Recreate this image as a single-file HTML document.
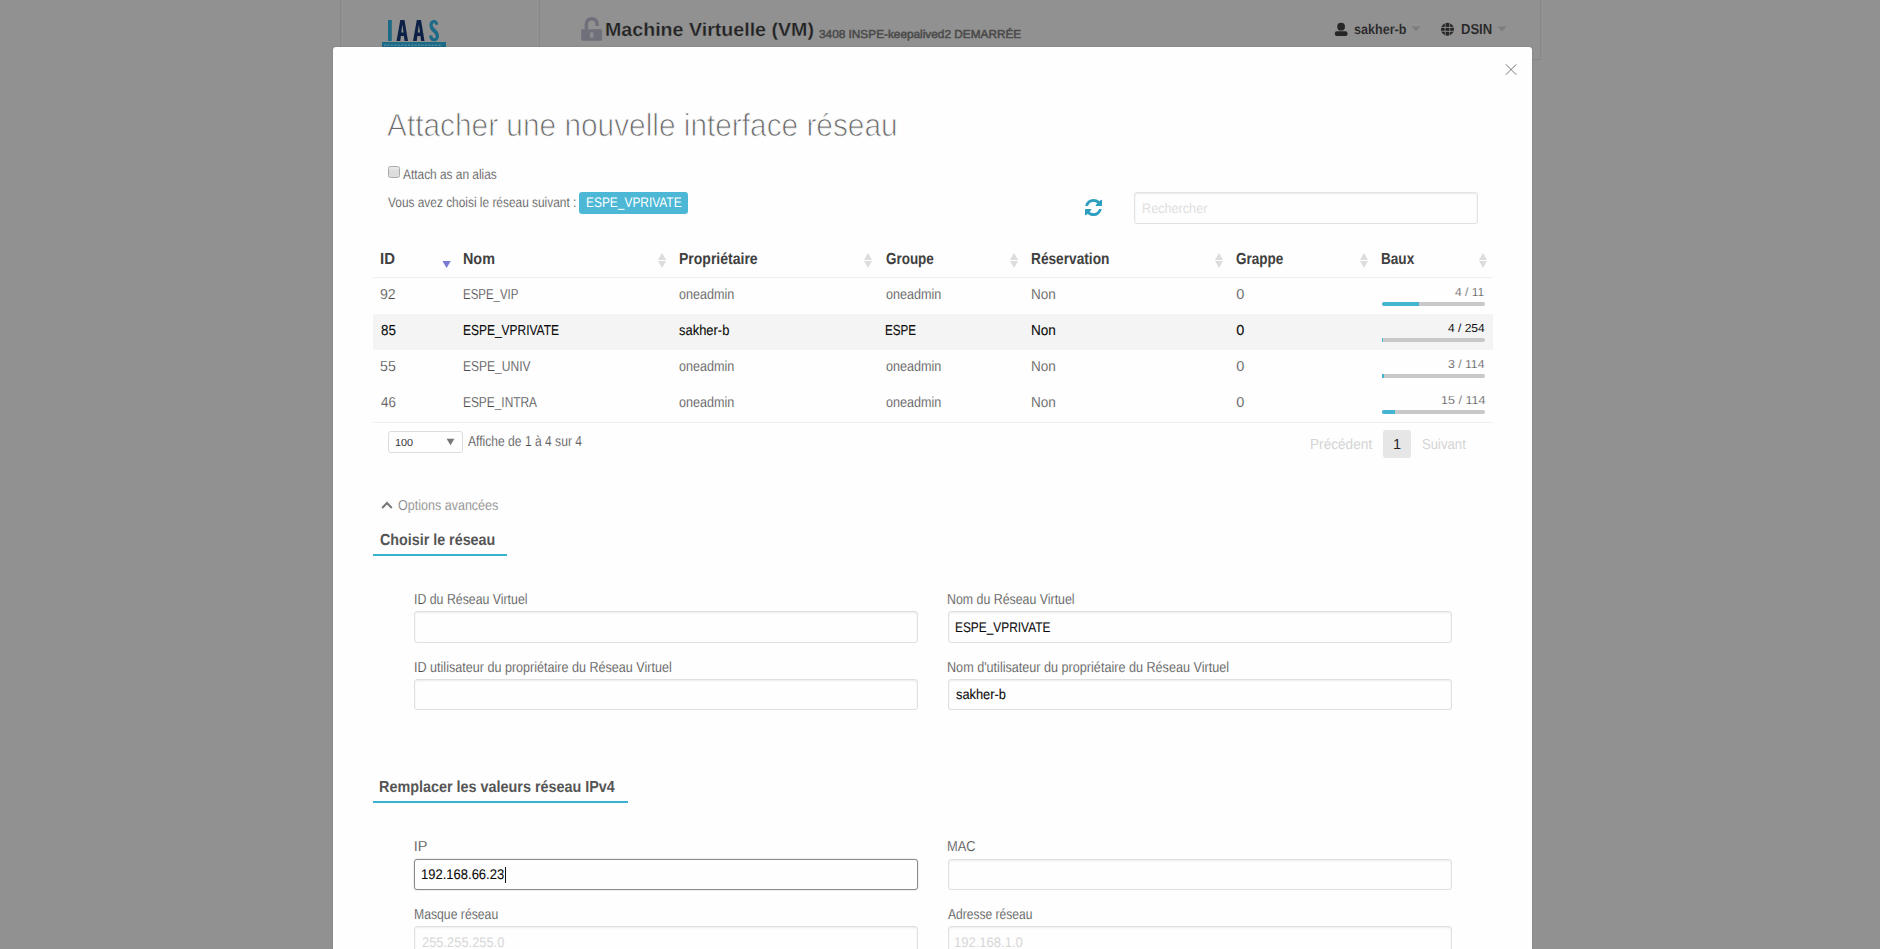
<!DOCTYPE html>
<html><head><meta charset="utf-8"><title>Attacher une nouvelle interface réseau</title>
<style>
html,body{margin:0;padding:0}
body{width:1880px;height:949px;overflow:hidden;position:relative;background:#919191;font-family:"Liberation Sans",sans-serif;text-rendering:geometricPrecision}
.b{position:absolute}
.t{position:absolute;white-space:pre;transform-origin:0 0}
</style></head><body>
<div class="b" style="left:340px;top:0px;width:1px;height:47px;background:#878787"></div>
<div class="b" style="left:539px;top:0px;width:1px;height:47px;background:#878787"></div>
<div class="b" style="left:1540px;top:0px;width:1px;height:59px;background:#878787"></div>
<div class="b" style="left:1532px;top:59px;width:9px;height:1px;background:#878787"></div>
<svg class="b" style="left:380px;top:17px" width="70" height="31" viewBox="0 0 70 31">
<rect x="8" y="3" width="3.8" height="21" fill="#1d6a86"/>
<path d="M16.5 24 L20.3 3 L24.5 3 L28 24 L24.6 24 L23.9 19 L20.9 19 L20.2 24 Z M21.3 15.5 L23.5 15.5 L22.4 7.5 Z" fill="#0d2146"/>
<path d="M33 24 L36.8 3 L41 3 L44.5 24 L41.1 24 L40.4 19 L37.4 19 L36.7 24 Z M37.8 15.5 L40 15.5 L38.9 7.5 Z" fill="#0d2146"/>
<path d="M58.2 7.6 C57.8 4.5 56.5 3 53.9 3 C51.2 3 49.4 5 49.4 8.2 C49.4 14.5 55.7 15.2 55.7 19.3 C55.7 20.6 55.1 21.2 54.1 21.2 C53 21.2 52.4 20.4 52.3 18.3 L49.1 18.5 C49.3 22.3 50.9 24.3 54 24.3 C57.1 24.3 59 22.2 59 19 C59 12.5 52.7 11.8 52.7 7.9 C52.7 6.8 53.2 6.1 54 6.1 C54.9 6.1 55.3 6.8 55.4 8.1 Z" fill="#1d6a86"/>
<rect x="2" y="25" width="64" height="6" fill="#1d6a86"/>
<path d="M4 28.3 h58" stroke="#4f8aa2" stroke-width="1.6" stroke-dasharray="2.2 1.2"/>
</svg>
<svg class="b" style="left:580px;top:16px" width="24" height="26" viewBox="0 0 24 26"><path d="M6.35 13.6 V8.15 A5.4 5.4 0 0 1 17.15 8.15 V9.9" fill="none" stroke="#6f7079" stroke-width="3.5"/><rect x="1.2" y="13.2" width="20.9" height="11.6" rx="1.6" fill="#6f7079"/><ellipse cx="11.75" cy="18.95" rx="1.9" ry="3" fill="#8c8c90"/></svg>
<svg class="b" style="left:1333px;top:22px" width="16" height="15" viewBox="0 0 16 15"><circle cx="8.1" cy="4.7" r="3.9" fill="#262626"/><rect x="1.8" y="9.3" width="12.8" height="4.8" rx="2.1" fill="#262626"/></svg>
<svg class="b" style="left:1440px;top:22px" width="15" height="15" viewBox="0 0 15 15"><defs><clipPath id="gc"><circle cx="7.45" cy="7.3" r="6.45"/></clipPath></defs><g clip-path="url(#gc)"><rect x="0" y="0" width="15" height="15" fill="#262626"/><path d="M0 5.4 H15 M0 9.3 H15" stroke="#919191" stroke-width="0.9"/><path d="M5.6 0 C4.9 4 4.9 10.6 5.6 15 M9.3 0 C10 4 10 10.6 9.3 15" stroke="#919191" stroke-width="0.8" fill="none"/></g></svg>
<svg class="b" style="left:1411px;top:26px" width="11" height="6"><path d="M0.5 0.5 H9.5 L5 5.2 Z" fill="#7d7d7d"/></svg>
<svg class="b" style="left:1497px;top:26px" width="11" height="6"><path d="M0.5 0.5 H9.5 L5 5.2 Z" fill="#7d7d7d"/></svg>
<div class="b" style="left:333px;top:47px;width:1199.3px;height:910px;background:#fefefe;border-radius:3px;box-shadow:0 0 2px rgba(0,0,0,0.15)"></div>
<svg class="b" style="left:1500px;top:59px" width="22" height="22"><path d="M5.8 5.3 L16.3 15.8 M16.3 5.3 L5.8 15.8" stroke="#7a7a7a" stroke-width="1"/></svg>
<div class="b" style="left:388px;top:166px;width:9.6px;height:9.6px;border:1px solid #a9a9a9;border-radius:2.5px;background:linear-gradient(#ececec,#dddddd 40%)"></div>
<div class="b" style="left:579px;top:192px;width:109px;height:22px;background:#4cb8d5;border-radius:3px"></div>
<svg class="b" style="left:1085px;top:199px" width="17" height="17" viewBox="0 0 1536 1536"><path fill="#2b9dbf" d="M1511 928q0 5-1 7-64 268-268 434.5T764 1536q-146 0-282.5-55T238 1324l-129 129q-19 19-45 19t-45-19-19-45V960q0-26 19-45t45-19h448q26 0 45 19t19 45-19 45L420 1143q71 66 161 102t187 36q134 0 250-65t186-179q11-17 53-117 8-23 30-23h192q13 0 22.5 9.5t9.5 22.5zm25-800v448q0 26-19 45t-45 19h-448q-26 0-45-19t-19-45 19-45l138-138Q969 256 768 256q-134 0-250 65T332 500q-11 17-53 117-8 23-30 23H50q-13 0-22.5-9.5T18 608v-7q65-268 270-434.5T768 0q146 0 284 55.5T1297 212l130-129q19-19 45-19t45 19 19 45z"/></svg>
<div class="b" style="left:1134px;top:192px;width:343.5px;height:32px;box-sizing:border-box;border:1px solid #e2e2e2;border-radius:3px;box-shadow:inset 0 1px 2px rgba(10,10,10,0.08)"></div>
<div class="b" style="left:373px;top:277px;width:1120px;height:1px;background:#f0f0f0"></div>
<div class="b" style="left:373px;top:422px;width:1120px;height:1px;background:#f0f0f0"></div>
<div class="b" style="left:373px;top:314px;width:1120px;height:36px;background:#f4f4f4"></div>
<svg class="b" style="left:441px;top:260px" width="11" height="9"><path d="M1.4 1 H9.8 L5.6 8 Z" fill="#7b7bd6"/></svg>
<svg class="b" style="left:657px;top:252px" width="10" height="17"><path d="M1 8 L5 1 L9 8 Z M1 9 H9 L5 16 Z" fill="#dcdcdc"/></svg>
<svg class="b" style="left:863px;top:252px" width="10" height="17"><path d="M1 8 L5 1 L9 8 Z M1 9 H9 L5 16 Z" fill="#dcdcdc"/></svg>
<svg class="b" style="left:1009px;top:252px" width="10" height="17"><path d="M1 8 L5 1 L9 8 Z M1 9 H9 L5 16 Z" fill="#dcdcdc"/></svg>
<svg class="b" style="left:1214px;top:252px" width="10" height="17"><path d="M1 8 L5 1 L9 8 Z M1 9 H9 L5 16 Z" fill="#dcdcdc"/></svg>
<svg class="b" style="left:1359px;top:252px" width="10" height="17"><path d="M1 8 L5 1 L9 8 Z M1 9 H9 L5 16 Z" fill="#dcdcdc"/></svg>
<svg class="b" style="left:1478px;top:252px" width="10" height="17"><path d="M1 8 L5 1 L9 8 Z M1 9 H9 L5 16 Z" fill="#dcdcdc"/></svg>
<div class="b" style="left:1382px;top:302px;width:103px;height:4px;background:#c8c8c8;border-radius:2px;overflow:hidden"></div>
<div class="b" style="left:1382px;top:302px;width:37px;height:4px;background:#45b4d0;border-radius:2px 0 0 2px"></div>
<div class="b" style="left:1382px;top:338px;width:103px;height:4px;background:#c8c8c8;border-radius:2px;overflow:hidden"></div>
<div class="b" style="left:1382px;top:338px;width:1.2px;height:4px;background:#45b4d0"></div>
<div class="b" style="left:1382px;top:374px;width:103px;height:4px;background:#c8c8c8;border-radius:2px;overflow:hidden"></div>
<div class="b" style="left:1382px;top:374px;width:2.2px;height:4px;background:#45b4d0"></div>
<div class="b" style="left:1382px;top:410px;width:103px;height:4px;background:#c8c8c8;border-radius:2px;overflow:hidden"></div>
<div class="b" style="left:1382px;top:410px;width:13px;height:4px;background:#45b4d0;border-radius:2px 0 0 2px"></div>
<div class="b" style="left:388px;top:431px;width:75px;height:21.5px;box-sizing:border-box;border:1px solid #dcdcdc;border-radius:3px;background:#fefefe"></div>
<svg class="b" style="left:446px;top:438px" width="9" height="8"><path d="M0.6 0.8 H8.4 L4.5 7.2 Z" fill="#777"/></svg>
<div class="b" style="left:1383px;top:430px;width:28px;height:28px;background:#e6e6e6;border-radius:3px"></div>
<svg class="b" style="left:380px;top:500px" width="14" height="10"><path d="M2.2 8 L7 3 L11.8 8" fill="none" stroke="#777" stroke-width="2"/></svg>
<div class="b" style="left:373px;top:554px;width:134px;height:2px;background:#3ab0cf"></div>
<div class="b" style="left:373px;top:801px;width:255px;height:2px;background:#3ab0cf"></div>
<div class="b" style="left:414px;top:611px;width:504px;height:32px;box-sizing:border-box;border:1px solid #e0e0e0;border-radius:3px;background:#fefefe;box-shadow:inset 0 1px 2px rgba(10,10,10,0.08)"></div>
<div class="b" style="left:948px;top:611px;width:504px;height:32px;box-sizing:border-box;border:1px solid #e0e0e0;border-radius:3px;background:#fefefe;box-shadow:inset 0 1px 2px rgba(10,10,10,0.08)"></div>
<div class="b" style="left:414px;top:679px;width:504px;height:31px;box-sizing:border-box;border:1px solid #e0e0e0;border-radius:3px;background:#fefefe;box-shadow:inset 0 1px 2px rgba(10,10,10,0.08)"></div>
<div class="b" style="left:948px;top:679px;width:504px;height:31px;box-sizing:border-box;border:1px solid #e0e0e0;border-radius:3px;background:#fefefe;box-shadow:inset 0 1px 2px rgba(10,10,10,0.08)"></div>
<div class="b" style="left:414px;top:858.5px;width:504px;height:31.5px;box-sizing:border-box;border:1px solid #8a8a8a;border-radius:3px;background:#fefefe;box-shadow:0 0 2px #cacaca"></div>
<div class="b" style="left:948px;top:858.5px;width:504px;height:31.5px;box-sizing:border-box;border:1px solid #e0e0e0;border-radius:3px;background:#fefefe;box-shadow:inset 0 1px 2px rgba(10,10,10,0.08)"></div>
<div class="b" style="left:414px;top:926px;width:504px;height:40px;box-sizing:border-box;border:1px solid #e0e0e0;border-radius:3px;background:#fefefe;box-shadow:inset 0 1px 2px rgba(10,10,10,0.08)"></div>
<div class="b" style="left:948px;top:926px;width:504px;height:40px;box-sizing:border-box;border:1px solid #e0e0e0;border-radius:3px;background:#fefefe;box-shadow:inset 0 1px 2px rgba(10,10,10,0.08)"></div>
<div class="b" style="left:505px;top:867px;width:1px;height:16px;background:#111"></div>
<div class="t" style="left:605.40px;top:21.00px;font-size:19px;line-height:19px;color:#222222;font-weight:bold;transform:scaleX(1.0327);-webkit-text-stroke:0.3px #919191">Machine Virtuelle (VM)</div>
<div class="t" style="left:819.42px;top:30.00px;font-size:11.5px;line-height:11.5px;color:#4a4a4a;transform:scaleX(1.0271);-webkit-text-stroke:0.5px #4a4a4a">3408 INSPE-keepalived2 DEMARRÉE</div>
<div class="t" style="left:1354.27px;top:22.00px;font-size:14px;line-height:14px;color:#262626;font-weight:bold;transform:scaleX(0.8979);-webkit-text-stroke:0.15px #919191">sakher-b</div>
<div class="t" style="left:1460.59px;top:23.00px;font-size:14.5px;line-height:14.5px;color:#262626;font-weight:bold;transform:scaleX(0.8987);-webkit-text-stroke:0.15px #919191">DSIN</div>
<div class="t" style="left:386.94px;top:109.00px;font-size:32px;line-height:32px;color:#6a6a6a;transform:scaleX(0.9319);-webkit-text-stroke:0.9px #fefefe">Attacher une nouvelle interface réseau</div>
<div class="t" style="left:403.03px;top:167.00px;font-size:14px;line-height:14px;color:#4a4a4a;transform:scaleX(0.8488);-webkit-text-stroke:0.2px #fefefe">Attach as an alias</div>
<div class="t" style="left:388.32px;top:195.00px;font-size:14px;line-height:14px;color:#4a4a4a;transform:scaleX(0.8491);-webkit-text-stroke:0.2px #fefefe">Vous avez choisi le réseau suivant :</div>
<div class="t" style="left:585.60px;top:195.00px;font-size:14px;line-height:14px;color:#ffffff;transform:scaleX(0.8513)">ESPE_VPRIVATE</div>
<div class="t" style="left:1141.74px;top:202.00px;font-size:13.8px;line-height:13.8px;color:#dedede;transform:scaleX(0.9168)">Rechercher</div>
<div class="t" style="left:380.35px;top:252.00px;font-size:16px;line-height:16px;color:#404040;font-weight:bold;transform:scaleX(0.9341)">ID</div>
<div class="t" style="left:462.78px;top:252.00px;font-size:16px;line-height:16px;color:#404040;font-weight:bold;transform:scaleX(0.8975)">Nom</div>
<div class="t" style="left:679.20px;top:252.00px;font-size:16px;line-height:16px;color:#404040;font-weight:bold;transform:scaleX(0.8756)">Propriétaire</div>
<div class="t" style="left:885.60px;top:252.00px;font-size:16px;line-height:16px;color:#404040;font-weight:bold;transform:scaleX(0.8404)">Groupe</div>
<div class="t" style="left:1031.12px;top:252.00px;font-size:16px;line-height:16px;color:#404040;font-weight:bold;transform:scaleX(0.8557)">Réservation</div>
<div class="t" style="left:1236.20px;top:252.00px;font-size:16px;line-height:16px;color:#404040;font-weight:bold;transform:scaleX(0.8446)">Grappe</div>
<div class="t" style="left:1380.82px;top:252.00px;font-size:16px;line-height:16px;color:#404040;font-weight:bold;transform:scaleX(0.8492)">Baux</div>
<div class="t" style="left:379.93px;top:288.00px;font-size:14.5px;line-height:14.5px;color:#4a4a4a;transform:scaleX(0.9732);-webkit-text-stroke:0.2px #fefefe">92</div>
<div class="t" style="left:462.64px;top:288.00px;font-size:14.5px;line-height:14.5px;color:#4a4a4a;transform:scaleX(0.7909);-webkit-text-stroke:0.2px #fefefe">ESPE_VIP</div>
<div class="t" style="left:679.30px;top:288.00px;font-size:14.5px;line-height:14.5px;color:#4a4a4a;transform:scaleX(0.8679);-webkit-text-stroke:0.2px #fefefe">oneadmin</div>
<div class="t" style="left:885.50px;top:288.00px;font-size:14.5px;line-height:14.5px;color:#4a4a4a;transform:scaleX(0.8679);-webkit-text-stroke:0.2px #fefefe">oneadmin</div>
<div class="t" style="left:1031.00px;top:288.00px;font-size:14.5px;line-height:14.5px;color:#4a4a4a;transform:scaleX(0.9338);-webkit-text-stroke:0.2px #fefefe">Non</div>
<div class="t" style="left:1236.20px;top:288.00px;font-size:14.5px;line-height:14.5px;color:#4a4a4a;-webkit-text-stroke:0.2px #fefefe">0</div>
<div class="t" style="left:1454.81px;top:287.00px;font-size:11.6px;line-height:11.6px;color:#4a4a4a;transform:scaleX(1.0420);-webkit-text-stroke:0.2px #fefefe">4 / 11</div>
<div class="t" style="left:380.70px;top:324.00px;font-size:14.5px;line-height:14.5px;color:#0a0a0a;transform:scaleX(0.9245);-webkit-text-stroke:0.1px #0a0a0a">85</div>
<div class="t" style="left:462.63px;top:324.00px;font-size:14.5px;line-height:14.5px;color:#0a0a0a;transform:scaleX(0.8248);-webkit-text-stroke:0.1px #0a0a0a">ESPE_VPRIVATE</div>
<div class="t" style="left:679.30px;top:324.00px;font-size:14.5px;line-height:14.5px;color:#0a0a0a;transform:scaleX(0.8920);-webkit-text-stroke:0.1px #0a0a0a">sakher-b</div>
<div class="t" style="left:884.75px;top:324.00px;font-size:14.5px;line-height:14.5px;color:#0a0a0a;transform:scaleX(0.8016);-webkit-text-stroke:0.1px #0a0a0a">ESPE</div>
<div class="t" style="left:1031.03px;top:324.00px;font-size:14.5px;line-height:14.5px;color:#0a0a0a;transform:scaleX(0.9322);-webkit-text-stroke:0.1px #0a0a0a">Non</div>
<div class="t" style="left:1236.20px;top:324.00px;font-size:14.5px;line-height:14.5px;color:#0a0a0a;-webkit-text-stroke:0.1px #0a0a0a">0</div>
<div class="t" style="left:1447.61px;top:323.00px;font-size:11.6px;line-height:11.6px;color:#111111;transform:scaleX(1.0361)">4 / 254</div>
<div class="t" style="left:379.87px;top:360.00px;font-size:14.5px;line-height:14.5px;color:#4a4a4a;transform:scaleX(0.9767);-webkit-text-stroke:0.2px #fefefe">55</div>
<div class="t" style="left:462.60px;top:360.00px;font-size:14.5px;line-height:14.5px;color:#4a4a4a;transform:scaleX(0.8301);-webkit-text-stroke:0.2px #fefefe">ESPE_UNIV</div>
<div class="t" style="left:679.30px;top:360.00px;font-size:14.5px;line-height:14.5px;color:#4a4a4a;transform:scaleX(0.8679);-webkit-text-stroke:0.2px #fefefe">oneadmin</div>
<div class="t" style="left:885.50px;top:360.00px;font-size:14.5px;line-height:14.5px;color:#4a4a4a;transform:scaleX(0.8679);-webkit-text-stroke:0.2px #fefefe">oneadmin</div>
<div class="t" style="left:1031.00px;top:360.00px;font-size:14.5px;line-height:14.5px;color:#4a4a4a;transform:scaleX(0.9338);-webkit-text-stroke:0.2px #fefefe">Non</div>
<div class="t" style="left:1236.20px;top:360.00px;font-size:14.5px;line-height:14.5px;color:#4a4a4a;-webkit-text-stroke:0.2px #fefefe">0</div>
<div class="t" style="left:1448.00px;top:359.00px;font-size:11.6px;line-height:11.6px;color:#4a4a4a;transform:scaleX(1.0538);-webkit-text-stroke:0.2px #fefefe">3 / 114</div>
<div class="t" style="left:380.71px;top:396.00px;font-size:14.5px;line-height:14.5px;color:#4a4a4a;transform:scaleX(0.9239);-webkit-text-stroke:0.2px #fefefe">46</div>
<div class="t" style="left:462.61px;top:396.00px;font-size:14.5px;line-height:14.5px;color:#4a4a4a;transform:scaleX(0.8199);-webkit-text-stroke:0.2px #fefefe">ESPE_INTRA</div>
<div class="t" style="left:679.30px;top:396.00px;font-size:14.5px;line-height:14.5px;color:#4a4a4a;transform:scaleX(0.8679);-webkit-text-stroke:0.2px #fefefe">oneadmin</div>
<div class="t" style="left:885.50px;top:396.00px;font-size:14.5px;line-height:14.5px;color:#4a4a4a;transform:scaleX(0.8679);-webkit-text-stroke:0.2px #fefefe">oneadmin</div>
<div class="t" style="left:1031.00px;top:396.00px;font-size:14.5px;line-height:14.5px;color:#4a4a4a;transform:scaleX(0.9338);-webkit-text-stroke:0.2px #fefefe">Non</div>
<div class="t" style="left:1236.20px;top:396.00px;font-size:14.5px;line-height:14.5px;color:#4a4a4a;-webkit-text-stroke:0.2px #fefefe">0</div>
<div class="t" style="left:1440.52px;top:395.00px;font-size:11.6px;line-height:11.6px;color:#4a4a4a;transform:scaleX(1.0808);-webkit-text-stroke:0.2px #fefefe">15 / 114</div>
<div class="t" style="left:394.91px;top:439.00px;font-size:10.2px;line-height:10.2px;color:#333333;transform:scaleX(1.0635)">100</div>
<div class="t" style="left:467.83px;top:435.00px;font-size:14.5px;line-height:14.5px;color:#4a4a4a;transform:scaleX(0.8334);-webkit-text-stroke:0.2px #fefefe">Affiche de 1 à 4 sur 4</div>
<div class="t" style="left:1309.60px;top:438.00px;font-size:14.5px;line-height:14.5px;color:#d4d4d4;transform:scaleX(0.9405)">Précédent</div>
<div class="t" style="left:1393.07px;top:438.00px;font-size:14.5px;line-height:14.5px;color:#222222">1</div>
<div class="t" style="left:1421.82px;top:438.00px;font-size:14.5px;line-height:14.5px;color:#d4d4d4;transform:scaleX(0.9057)">Suivant</div>
<div class="t" style="left:397.54px;top:499.00px;font-size:14.5px;line-height:14.5px;color:#808080;transform:scaleX(0.8643);-webkit-text-stroke:0.2px #fefefe">Options avancées</div>
<div class="t" style="left:379.50px;top:533.00px;font-size:16px;line-height:16px;color:#555555;font-weight:bold;transform:scaleX(0.8935)">Choisir le réseau</div>
<div class="t" style="left:413.96px;top:593.00px;font-size:14.5px;line-height:14.5px;color:#4a4a4a;transform:scaleX(0.8499);-webkit-text-stroke:0.2px #fefefe">ID du Réseau Virtuel</div>
<div class="t" style="left:947.48px;top:593.00px;font-size:14.5px;line-height:14.5px;color:#4a4a4a;transform:scaleX(0.8528);-webkit-text-stroke:0.2px #fefefe">Nom du Réseau Virtuel</div>
<div class="t" style="left:954.72px;top:620.00px;font-size:14px;line-height:14px;color:#0a0a0a;transform:scaleX(0.8492);-webkit-text-stroke:0.1px #0a0a0a">ESPE_VPRIVATE</div>
<div class="t" style="left:413.94px;top:661.00px;font-size:14.5px;line-height:14.5px;color:#4a4a4a;transform:scaleX(0.8675);-webkit-text-stroke:0.2px #fefefe">ID utilisateur du propriétaire du Réseau Virtuel</div>
<div class="t" style="left:947.46px;top:661.00px;font-size:14.5px;line-height:14.5px;color:#4a4a4a;transform:scaleX(0.8701);-webkit-text-stroke:0.2px #fefefe">Nom d'utilisateur du propriétaire du Réseau Virtuel</div>
<div class="t" style="left:955.50px;top:687.00px;font-size:14px;line-height:14px;color:#0a0a0a;transform:scaleX(0.9137);-webkit-text-stroke:0.1px #0a0a0a">sakher-b</div>
<div class="t" style="left:378.78px;top:780.00px;font-size:16px;line-height:16px;color:#555555;font-weight:bold;transform:scaleX(0.8989)">Remplacer les valeurs réseau IPv4</div>
<div class="t" style="left:413.81px;top:840.00px;font-size:14.5px;line-height:14.5px;color:#4a4a4a;-webkit-text-stroke:0.2px #fefefe">IP</div>
<div class="t" style="left:947.44px;top:840.00px;font-size:14.5px;line-height:14.5px;color:#4a4a4a;transform:scaleX(0.8891);-webkit-text-stroke:0.2px #fefefe">MAC</div>
<div class="t" style="left:421.17px;top:867.00px;font-size:14px;line-height:14px;color:#0a0a0a;transform:scaleX(0.9290);-webkit-text-stroke:0.1px #0a0a0a">192.168.66.23</div>
<div class="t" style="left:413.99px;top:908.00px;font-size:14.5px;line-height:14.5px;color:#4a4a4a;transform:scaleX(0.8421);-webkit-text-stroke:0.2px #fefefe">Masque réseau</div>
<div class="t" style="left:948.33px;top:908.00px;font-size:14.5px;line-height:14.5px;color:#4a4a4a;transform:scaleX(0.8313);-webkit-text-stroke:0.2px #fefefe">Adresse réseau</div>
<div class="t" style="left:422.00px;top:935.00px;font-size:14px;line-height:14px;color:#d6d6d6;transform:scaleX(0.9198)">255.255.255.0</div>
<div class="t" style="left:954.45px;top:935.00px;font-size:14px;line-height:14px;color:#d6d6d6;transform:scaleX(0.9303)">192.168.1.0</div>
</body></html>
